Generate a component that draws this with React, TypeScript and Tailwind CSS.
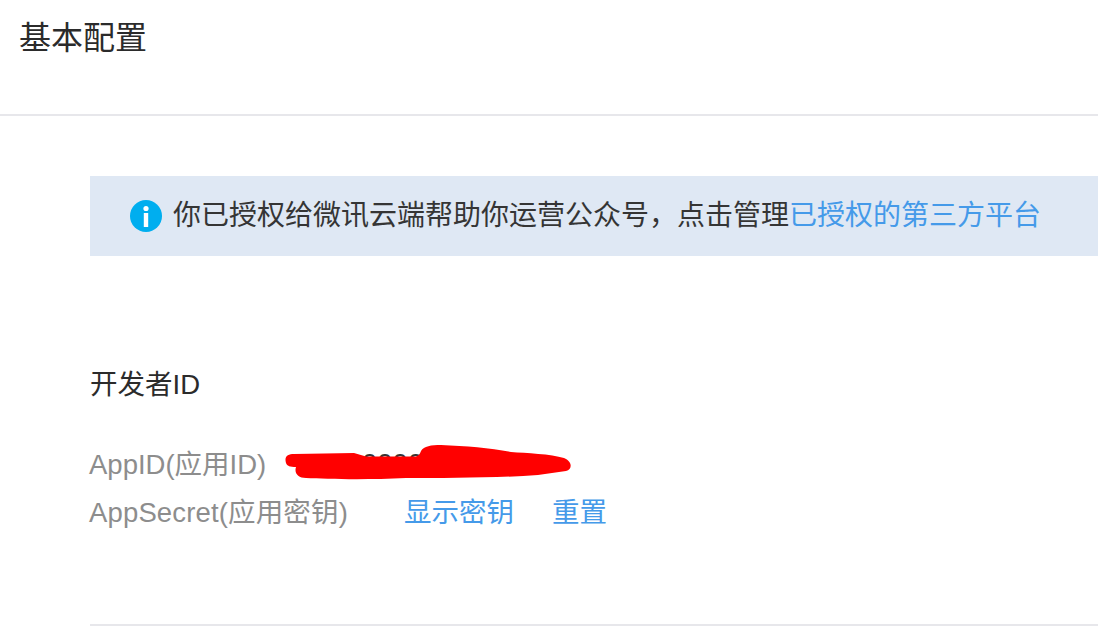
export default function App() {
  return (
    <div className="w-[1098px] h-[640px] overflow-hidden bg-white font-['Liberation_Sans','Noto_Sans_CJK_SC',sans-serif]">
      <div className="h-[116px] border-b-2 border-[#e7e7eb] pl-[19px] pt-[17px] text-[32px] leading-[42px] text-[#2b2b2b]">基本配置</div>
      <div className="pl-[90px]">
        <div className="mt-[60px] h-[80px] bg-[#dfe8f4] flex items-center pl-10 text-[28px] text-[#353535]">
          <svg width="32" height="32" viewBox="0 0 32 32" className="mr-[11px] shrink-0">
            <circle cx="16" cy="16" r="16" fill="#00aeef" />
            <circle cx="16" cy="8.5" r="2.6" fill="#fff" />
            <rect x="13.8" y="13" width="4.4" height="14" fill="#fff" />
          </svg>
          <span>你已授权给微讯云端帮助你运营公众号，点击管理<span className="text-[#459ae9]">已授权的第三方平台</span></span>
        </div>
        <div className="mt-[110px] text-[27.5px] leading-[38px] text-[#2b2b2b]">开发者ID</div>
        <div className="mt-[37px] relative flex items-center h-[48px] text-[27.5px] text-[#8d8d8d] -ml-px">
          <span>AppID(应用ID)</span>
          <span className="absolute left-[273px] top-[2px] text-[#353535]">0000</span>
          <svg width="300" height="50" viewBox="0 0 300 50" className="absolute left-[187px] top-[4px]">
            <path d="M10 18 C8 11 12 9 18 9 L78 8 L90 11.5 L138 11.5 C142 12 144 9 145 6 C148 1 155 0 165 0 C190 1 215 3 235 7 C250 8 275 9 288 13 C296 16 297 24 290 26 L262 30 C220 33 170 33 130 33 C90 35 50 34 30 33 C22 33 18 28 20 22 C14 22 11 21 10 18 Z" fill="#ff0000" />
          </svg>
        </div>
        <div className="flex items-center h-[48px] text-[27.5px] text-[#8d8d8d] -ml-px">
          <span className="w-[315px] tracking-[0.15px]">AppSecret(应用密钥)</span>
          <span className="text-[#459ae9] mr-[38px]">显示密钥</span>
          <span className="text-[#459ae9]">重置</span>
        </div>
        <div className="mt-[87px] border-t-2 border-[#e7e7eb]" />
      </div>
    </div>
  );
}
